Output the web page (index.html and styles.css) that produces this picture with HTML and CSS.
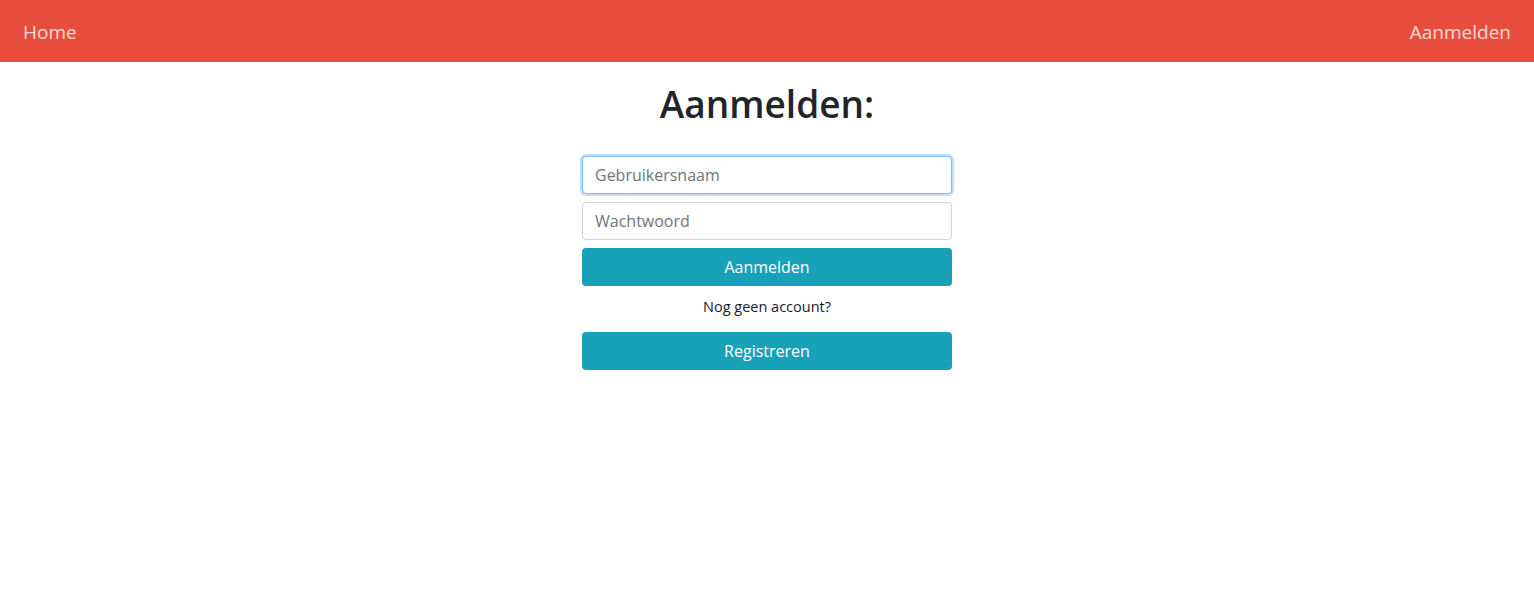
FILE: index.html
```html
<!DOCTYPE html>
<html lang="nl">
<head>
<meta charset="utf-8">
<title>Aanmelden</title>
<link rel="stylesheet" href="styles.css">
</head>
<body>
<nav class="navbar">
  <a class="nav-link" href="#">Home</a>
  <a class="nav-link" href="#">Aanmelden</a>
</nav>
<main class="content">
  <h1 class="title">Aanmelden:</h1>
  <form class="login-form">
    <input class="field field-focus" type="text" placeholder="Gebruikersnaam">
    <input class="field" type="password" placeholder="Wachtwoord">
    <button class="btn" type="button">Aanmelden</button>
    <p class="hint">Nog geen account?</p>
    <button class="btn" type="button">Registreren</button>
  </form>
</main>
</body>
</html>
```
FILE: styles.css
```css
* { box-sizing: border-box; }
body {
  margin: 0;
  font-family: "Open Sans", "Noto Sans", sans-serif;
  color: #212529;
  background: #fff;
}
.navbar {
  height: 62px;
  background: #e74c3c;
  display: flex;
  align-items: center;
  justify-content: space-between;
  padding: 0 23px;
}
.nav-link {
  color: rgba(255, 255, 255, 0.8);
  text-decoration: none;
  font-size: 19px;
  line-height: 1;
  padding-top: 2px;
}
.content {
  display: flex;
  flex-direction: column;
  align-items: center;
}
.title {
  margin: 19px 0 29px;
  font-size: 37px;
  font-weight: 600;
  line-height: 46px;
  color: #212529;
}
.login-form {
  width: 370px;
  display: flex;
  flex-direction: column;
  gap: 8px;
}
.field {
  height: 38px;
  padding: 6px 12px;
  font-family: inherit;
  font-size: 16px;
  border: 1px solid #ced4da;
  border-radius: 4px;
  color: #495057;
  outline: none;
}
.field::placeholder { color: #6c757d; }
.field-focus {
  border-color: #80bdff;
  box-shadow: 0 0 0 2px rgba(0, 123, 255, 0.25);
}
.btn {
  height: 38px;
  border: none;
  border-radius: 4px;
  background: #17a2b8;
  color: #fff;
  font-family: inherit;
  font-size: 16px;
  cursor: pointer;
}
.hint {
  margin: 1px 0 5px;
  text-align: center;
  font-size: 14.5px;
  color: #1a1a2e;
  line-height: 24px;
}
```
